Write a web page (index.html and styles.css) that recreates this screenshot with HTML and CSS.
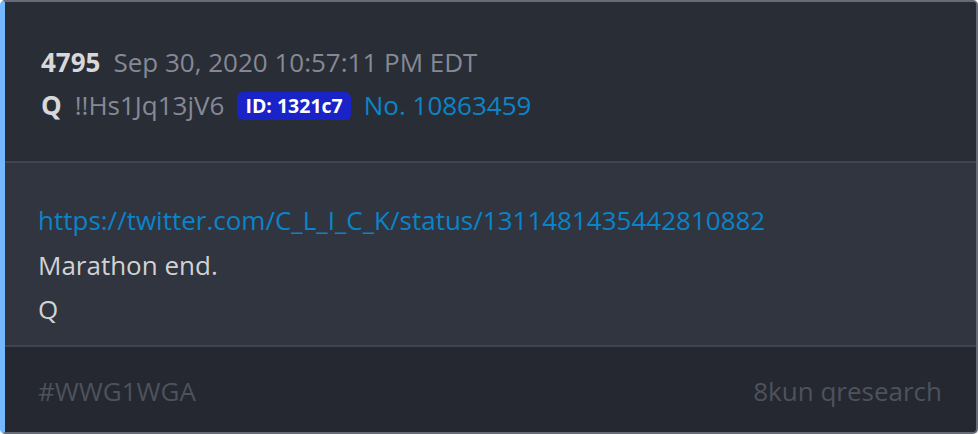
FILE: index.html
```html
<!DOCTYPE html>
<html lang="en">
<head>
  <meta charset="UTF-8">
  <title>Q Drop 4795</title>
  <link rel="stylesheet" href="styles.css">
</head>
<body>
  <div class="post">
    <div class="post-header">
      <div class="line">
        <span class="num">4795</span>
        <span class="date">Sep 30, 2020 10:57:11 PM EDT</span>
      </div>
      <div class="line">
        <span class="author">Q</span>
        <span class="trip">!!Hs1Jq13jV6</span>
        <span class="uid">ID: 1321c7</span>
        <span class="postno">No. 10863459</span>
      </div>
    </div>

    <div class="post-body">
      <div class="text"><a href="#">https://twitter.com/C_L_I_C_K/status/1311481435442810882</a></div>
      <div class="text">Marathon end.</div>
      <div class="text">Q</div>
    </div>

    <div class="post-footer">
      <span>#WWG1WGA</span>
      <span>8kun qresearch</span>
    </div>
  </div>
</body>
</html>
```

FILE: styles.css
```css
body {
  margin: 0;
  background: #ffffff;
  font-family: "Open Sans", sans-serif;
  font-size: 26px;
}
.post {
  height: 434px;
  box-sizing: border-box;
  border: 2px solid #676b76;
  border-left: 5px solid #74b9ff;
  border-radius: 5px;
  background: #252830;
  display: flex;
  flex-direction: column;
  overflow: hidden;
}
.post-header {
  background: #292d36;
  padding: 39px 33px 34px 36px;
  border-bottom: 2px solid #3f444e;
}
.line {
  line-height: 43px;
  display: flex;
  align-items: center;
  gap: 13px;
}
.num, .author {
  font-weight: bold;
  color: #d8d8da;
}
.date, .trip {
  color: #868995;
}
.uid {
  background: #1a23c8;
  color: #fff;
  font-weight: bold;
  font-size: 19.5px;
  line-height: 28px;
  padding: 0 8px;
  border-radius: 6px;
}
.postno {
  color: #0b85c8;
}
.post-body {
  background: #30353f;
  padding: 35px 33px 13px;
  border-bottom: 2px solid #3f444e;
}
.text {
  line-height: 44.5px;
  color: #d2d2d4;
}
.text a {
  color: #0a84c9;
  text-decoration: none;
}
.post-footer {
  flex: 1;
  display: flex;
  justify-content: space-between;
  padding: 22px 34px 0 33px;
  line-height: 44px;
  color: #4d525d;
}
```
